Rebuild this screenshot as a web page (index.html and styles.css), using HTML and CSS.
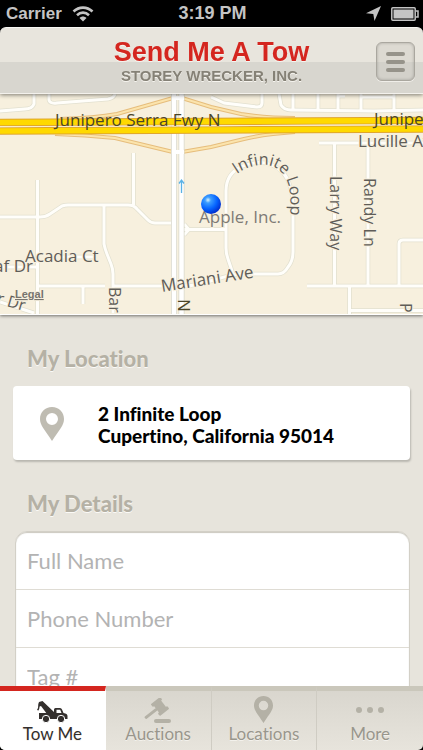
FILE: index.html
```
<!DOCTYPE html>
<html lang="en">
<head>
    <meta charset="UTF-8">
    <meta name="viewport" content="width=device-width, initial-scale=1.0">
    <title>Send Me A Tow</title>
    <link rel="stylesheet" href="styles.css">
</head>
<body>
    <div class="app">
        <div class="status-bar">
            <div class="status-left">
                <span>Carrier</span>
                <svg width="22" height="16" viewBox="0 0 22 16" fill="none" stroke="#c4c4c4" stroke-width="2.6">
                    <path d="M1.5 5.5C7 .3 15 .3 20.500 5.500M5 9.200C8.500 5.800 13.500 5.800 17 9.200"/>
                    <path d="M7.500 12C9.500 10 12.500 10 14.500 12L11 15.500Z" fill="#c4c4c4" stroke="none"/>
                </svg>
            </div>
            <span class="status-time">3:19 PM</span>
            <div class="status-right">
                <svg width="15" height="15" viewBox="0 0 15 15" fill="#c4c4c4">
                    <path d="M15 0L8.500 15L7.300 8L0 7.200Z"/>
                </svg>
                <svg width="28" height="14" viewBox="0 0 28 14">
                    <rect x=".8" y=".8" width="23.400" height="12.400" rx="1" fill="none" stroke="#c4c4c4" stroke-width="1.500"/>
                    <rect x="2.500" y="2.500" width="20" height="9" fill="#c4c4c4"/>
                    <path d="M25 4H27V10H25" fill="none" stroke="#c4c4c4" stroke-width="1.500"/>
                </svg>
            </div>
        </div>

        <header class="header">
            <div class="header-titles">
                <h1>Send Me A Tow</h1>
                <p>STOREY WRECKER, INC.</p>
            </div>
            <button class="menu-button" type="button" aria-label="Menu">
                <span></span>
                <span></span>
                <span></span>
            </button>
        </header>

        <main class="content">
            <svg class="map" viewBox="0 0 423 220" preserveAspectRatio="xMidYMid slice" role="img" aria-label="Map of Infinite Loop">
                <defs>
                    <!-- roads are drawn twice: casing and fill -->
                    <g id="streets" fill="none" stroke-linejoin="round">
                        <path d="M34 0V10Q32 15 25 15L0 17M49 0V6Q50 10 57 9L108 5Q114 4 115 0"/>
                        <path d="M211 3L224 9L257 13Q262 13 262 9V0M279 0L281 11Q284 16 291 16L374 17L423 16"/>
                        <path d="M293 0V16M318 0V16M338 0V16M361 0V16M394 0V16M361 3H394M338 2H345"/>
                        <path d="M37.500 86V220M133.500 59V111M0 123H40Q46 123 50 120L62 112Q65 111 68 111H128Q134 111 137 115L148 126Q151 129 155 129H172"/>
                        <path d="M104 111V150Q105 155 107 160L111 170Q113 175 113 180V220M38 192H105M113 192H172M83 192V210M0 173H37M60 163H95M0 208L34 219"/>
                        <path d="M184 135.500H226M184 130L189 135.500L184 141"/>
                        <path d="M226 136V97C226 84 233 76 243 72C262 64 284 70 290 92Q293 100 293 115V158Q293 167 288 173Q284 180 278 180H240C222 181 204 192 184 192M226 136V154Q226 160 228 165L233 180"/>
                        <path d="M319 49H423M334.500 49V192M368 49V192M307 192H423M349.500 192V220M349 216.500H423M399 192V150Q399 146 403 146H423"/>
                    </g>
                    <path id="ramps" fill="none" d="M60 25Q95 24 117 20L173 4M182 4L211 13L241 20Q265 24 295 24M55 40Q85 41 115 44L173 58M182 58L211 53L244 45Q265 40 295 38"/>
                    <path id="loopPath" d="M237 80C248 72 267 66 279 76C292 86 291 105 290 128"/>
                    <radialGradient id="dot" cx=".35" cy=".3" r=".75">
                        <stop offset="0" stop-color="#d6f1ff"/>
                        <stop offset=".2" stop-color="#3b9dff"/>
                        <stop offset=".6" stop-color="#0563ff"/>
                        <stop offset="1" stop-color="#0028c8"/>
                    </radialGradient>
                </defs>

                <rect width="423" height="220" fill="#f7f0de"/>
                <use href="#streets" stroke="#e2e0d0" stroke-width="4.500"/>
                <use href="#streets" stroke="#fffefa" stroke-width="3"/>
                <use href="#ramps" stroke="#e6bd7c" stroke-width="4"/>
                <use href="#ramps" stroke="#fbe4ad" stroke-width="2"/>

                <path d="M174 0V220M181.500 0V220" stroke="#d8d7cb" stroke-width="6"/>
                <path d="M174 0V220M181.500 0V220" stroke="#fff" stroke-width="4.500"/>
                <path d="M172 4H184M172 58H184" stroke="#fff" stroke-width="4"/>

                <g fill="none">
                    <path d="M0 28.500L423 26.500M0 37L423 35" stroke="#dfa52c" stroke-width="7.500"/>
                    <path d="M0 28.500L423 26.500M0 37L423 35" stroke="#ffd900" stroke-width="5.500"/>
                    <path d="M0 32.700L423 30.700" stroke="#f9edca" stroke-width="1"/>
                </g>
                <path d="M181.500 99V86M179 89.500L181.500 86L184 89.500" fill="none" stroke="#5ab2e6" stroke-width="1.300"/>

                <g class="map-labels">
                    <text x="55" y="32" class="label-highway">Junipero Serra Fwy N</text>
                    <text x="374" y="31" class="label-highway">Junipero</text>
                    <text x="358" y="53">Lucille Ave</text>
                    <text class="label-turned"><textPath href="#loopPath">Infinite Loop</textPath></text>
                    <text class="label-turned" transform="translate(330 82) rotate(90)">Larry Way</text>
                    <text class="label-turned" transform="translate(364 84) rotate(90)">Randy Ln</text>
                    <text x="25" y="168">Acadia Ct</text>
                    <text x="33" y="178" text-anchor="end">Leaf Dr</text>
                    <text class="label-turned" transform="translate(-4 209) rotate(16)">r Dr</text>
                    <text class="label-turned" transform="translate(109 193) rotate(90)">Barranca</text>
                    <text transform="translate(178 205) rotate(90)" class="label-highway">N</text>
                    <text class="label-turned" transform="translate(400 209) rotate(90)">P</text>
                    <text transform="translate(162 198) rotate(-9)">Mariani Ave</text>
                    <text x="199" y="129" class="label-place">Apple, Inc.</text>
                    <text x="15" y="204" class="label-legal">Legal</text>
                </g>

                <circle cx="211" cy="110" r="10" fill="url(#dot)"/>
            </svg>

            <section class="section">
                <h2>My Location</h2>
                <div class="location-card">
                    <svg class="pin" width="24" height="35" viewBox="0 0 24 35">
                        <path d="M12 0C5 0 0 5 0 12C0 18 4 22 12 34C20 22 24 18 24 12C24 5 19 0 12 0ZM12 6A6 6 0 1 1 12 18A6 6 0 1 1 12 6Z" fill="#bfbcb2" fill-rule="evenodd"/>
                    </svg>
                    <address>2 Infinite Loop<br>Cupertino, California 95014</address>
                </div>
            </section>

            <section class="section">
                <h2>My Details</h2>
                <form class="details">
                    <input type="text" placeholder="Full Name" aria-label="Full Name">
                    <input type="tel" placeholder="Phone Number" aria-label="Phone Number">
                    <input type="text" placeholder="Tag #" aria-label="Tag #">
                </form>
            </section>
        </main>

        <nav class="tab-bar">
            <a href="#tow" class="tab active">
                <svg width="31" height="22" viewBox="0 0 31 22" fill="#332f2d">
                    <!-- boom and hook -->
                    <path d="M2 1L5.500 0L17.500 11.500V13H10L4 5L2.600 5.500L2.300 7.500L1.500 9.500L0 9L1 7L1.300 3Z"/>
                    <!-- body and cab -->
                    <path fill-rule="evenodd" d="M2 12H17V8.500Q17 7 18.500 7H23Q24.500 7 25 8.500L26.500 12Q30.500 12.500 30.500 15V18H2ZM19.500 8.800V12H24.500L23.200 8.800Z"/>
                    <g stroke="#fff" stroke-width="1">
                        <circle cx="9" cy="18" r="3.700"/>
                        <circle cx="24" cy="18" r="3.700"/>
                    </g>
                </svg>
                <span>Tow Me</span>
            </a>
            <a href="#auctions" class="tab">
                <svg width="28" height="25" viewBox="0 0 28 25" fill="#b4b1a6">
                    <!-- gavel head, turned with its handle -->
                    <g transform="translate(16 8.500) rotate(-38)">
                        <rect x="-4.500" y="-5" width="9" height="10"/>
                        <rect x="-6" y="-7.500" width="12" height="3.500" rx="1"/>
                        <rect x="-6" y="4" width="12" height="3.500" rx="1"/>
                        <rect x="-19" y="-1.500" width="15" height="3" rx="1"/>
                    </g>
                    <rect x="10" y="21" width="17" height="4" rx="2"/>
                </svg>
                <span>Auctions</span>
            </a>
            <a href="#locations" class="tab">
                <svg width="19" height="27" viewBox="0 0 24 34" fill="#b4b1a6">
                    <path d="M12 0C5 0 0 5 0 12C0 18 4 22 12 34C20 22 24 18 24 12C24 5 19 0 12 0ZM12 6A6 6 0 1 1 12 18A6 6 0 1 1 12 6Z" fill-rule="evenodd"/>
                </svg>
                <span>Locations</span>
            </a>
            <a href="#more" class="tab">
                <svg width="28" height="27" viewBox="0 0 28 27" fill="#b4b1a6">
                    <circle cx="3" cy="14" r="3"/>
                    <circle cx="14" cy="14" r="3"/>
                    <circle cx="25" cy="14" r="3"/>
                </svg>
                <span>More</span>
            </a>
        </nav>
    </div>
</body>
</html>
```

FILE: styles.css
```
:root {
    --background: #e7e4dc;
    --muted: #b5b1a5;
    --red: #d4261f;
    --line: #dfdcd4;
}

* {
    margin: 0;
    padding: 0;
    box-sizing: border-box;
}

body {
    background: #000;
    font-family: Lato, 'Open Sans', sans-serif;
    font-variant-ligatures: none;
}

.app {
    display: flex;
    flex-direction: column;
    height: 100vh;
    overflow: hidden;
    border-radius: 0 0 5px 5px;
}

/* Status bar */
.status-bar {
    display: grid;
    grid-template-columns: 1fr auto 1fr;
    align-items: center;
    flex: none;
    height: 27px;
    padding: 0 4px 0 6px;
    color: #c4c4c4;
    font: bold 18px 'Liberation Sans', sans-serif;
}

.status-left,
.status-right {
    display: flex;
    align-items: center;
    gap: 10px;
}

.status-left {
    font-size: 17px;
}

.status-right {
    justify-content: flex-end;
}

/* Header */
.header {
    position: relative;
    z-index: 1;
    display: flex;
    align-items: center;
    justify-content: center;
    flex: none;
    height: 67px;
    background: linear-gradient(#e8e5dd 34px, #d8d6cf 34px);
    border-top: 1px solid #f8f7f3;
    border-bottom: 1px solid #f3f1ec;
    border-radius: 6px 6px 0 0;
    box-shadow: 0 1px 4px rgba(0,0,0,0.5);
    font-family: 'Liberation Sans', sans-serif;
    text-align: center;
    text-shadow: 0 1px 0 #f6f4ef;
}

.header h1 {
    color: var(--red);
    font-size: 27px;
    line-height: 30px;
}

.header p {
    color: #858176;
    font-size: 15px;
    font-weight: bold;
    line-height: 18px;
}

.menu-button {
    position: absolute;
    top: 14px;
    right: 8px;
    display: flex;
    flex-direction: column;
    align-items: center;
    justify-content: center;
    gap: 4px;
    width: 39px;
    height: 39px;
    background: rgba(205,202,194,0.4);
    border: 1px solid #aaa79f;
    border-radius: 6px;
    box-shadow: inset 0 0 3px rgba(0,0,0,0.25), 0 1px 0 #f0eee9;
    cursor: pointer;
}

.menu-button span {
    width: 19px;
    height: 4px;
    background: #96938a;
    border-radius: 2px;
}

/* Map */
.content {
    flex: 1;
    min-height: 0;
    overflow-y: auto;
    scrollbar-width: none;
    background: var(--background);
}

.map {
    display: block;
    width: 100%;
    height: 221px;
    border-bottom: 1px solid #fff;
    box-shadow: 0 1px 3px rgba(0,0,0,0.5);
}

.map-labels {
    fill: #5f5d58;
    stroke: #f7f0de;
    stroke-width: 2px;
    paint-order: stroke;
    font-family: 'Open Sans', sans-serif;
    font-size: 17px;
}

.label-turned {
    font-size: 16px;
}

.label-highway {
    fill: #4b4629;
    stroke: none;
}

.label-place {
    fill: #7e7b76;
}

.label-legal {
    fill: #77746e;
    font: bold 11px 'Liberation Sans', sans-serif;
    text-decoration: underline;
}

/* Sections */
.section {
    padding: 29px 13px 0;
}

.section h2 {
    padding: 0 14px;
    margin-bottom: 13px;
    color: var(--muted);
    font-size: 22px;
    font-weight: 900;
    line-height: 29px;
    text-shadow: 0 1px 0 #fbfaf7;
}

.location-card {
    display: flex;
    align-items: center;
    gap: 34px;
    height: 74px;
    padding: 3px 27px 0;
    background: #fff;
    border-radius: 4px;
    box-shadow: 1px 2px 2px rgba(0,0,0,0.2);
}

.location-card address {
    color: #000;
    font-size: 19px;
    font-style: normal;
    font-weight: 900;
    line-height: 22px;
}

.details {
    margin: 0 0 0 2px;
    overflow: hidden;
    background: #fff;
    border: 1px solid #d3d0c7;
    border-radius: 12px;
    box-shadow: inset 0 1px 1px #cbc8bf;
}

.details input {
    display: block;
    width: 100%;
    height: 58px;
    padding: 0 11px;
    background: none;
    border: none;
    border-bottom: 1px solid var(--line);
    font: 22px Lato, sans-serif;
}

.details input::placeholder {
    color: #b3b3b3;
    opacity: 1;
}

/* Tab bar */
.tab-bar {
    display: grid;
    grid-template-columns: repeat(4, 1fr);
    flex: none;
    height: 64px;
    background: linear-gradient(#d8d5cd, #e7e4dc);
}

.tab {
    display: flex;
    flex-direction: column;
    align-items: center;
    justify-content: flex-end;
    border-top: 5px solid #cac7bb;
    border-right: 1px solid #cfccc3;
    color: #99968c;
    font-size: 17px;
    line-height: 22px;
    text-decoration: none;
    text-shadow: 0 1px 0 #f3f1ec;
    padding-bottom: 5px;
}

.tab:last-child {
    border-right: none;
}

.tab.active {
    background: #fff;
    border-top-color: var(--red);
    border-right-color: #fff;
    color: #332f2d;
}
```
